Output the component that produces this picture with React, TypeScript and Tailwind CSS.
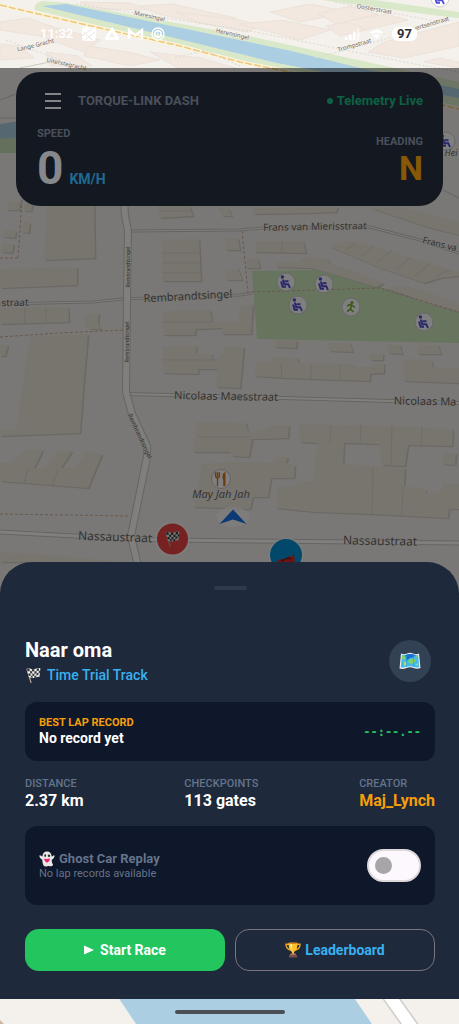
import type { ReactNode } from 'react'

interface Building {
  points: string
}

interface StreetLabel {
  text: string
  x: number
  y: number
  size: number
  rotate: number
}

interface StatProps {
  label: string
  value: string
  accent?: boolean
}

// above the dash
const northBuildings: Building[] = [
  { points: '0,22 28,18 62,30 40,36 0,30' },
  { points: '40,36 58,28 100,40 84,52' },
  { points: '88,46 128,52 160,60 130,66 84,56' },
  { points: '150,52 200,58 236,68 178,68' },
  { points: '0,44 20,46 34,58 0,60' },
  { points: '46,52 78,56 92,66 50,66' },
  { points: '80,2 130,3 150,10 96,9' },
  { points: '140,6 172,4 236,18 216,26 158,14' },
  { points: '176,12 240,20 262,26 246,32 198,22' },
  { points: '240,24 282,20 330,30 300,40' },
  { points: '270,12 310,4 350,12 300,22' },
  { points: '318,14 350,6 378,14 336,24' },
  { points: '352,20 386,14 408,20 366,30' },
  { points: '326,26 350,22 366,30 340,36' },
  { points: '368,52 384,42 459,22 459,46 404,58' },
  { points: '424,62 440,58 459,62 459,68' },
]

const buildings: Building[] = [
  // west side
  { points: '8,202 20,202 19,210 7,210' },
  { points: '24,204 33,204 31,211 24,211' },
  { points: '24,221 30,223 29,233 22,232' },
  { points: '4,230 16,231 15,238 3,237' },
  { points: '2,244 14,244 12,253 1,252' },
  { points: '47,204 94,204 95,258 44,260' },
  { points: '0,269 77,267 77,285 0,288' },
  { points: '0,308 68,307 69,322 0,324' },
  { points: '84,314 99,313 98,324 101,329 91,329 85,325' },
  { points: '0,345 8,345 5,356 0,356' },
  { points: '30,337 88,334 84,380 80,433 0,436 0,430 16,430' },
  { points: '0,463 10,463 28,449 43,450 34,468 45,468 58,451 72,451 61,468 76,467 86,452 102,454 88,488 0,481' },
  { points: '0,552 60,556 100,560 130,562 0,562' },
  // middle
  { points: '157,206 190,206 193,216 160,218' },
  { points: '218,208 228,208 232,216 222,216' },
  { points: '162,240 199,239 201,281 162,281' },
  { points: '226,238 238,238 240,250 226,250' },
  { points: '226,272 238,268 242,280 226,280' },
  { points: '163,311 210,310 212,322 240,322 240,333 224,334 222,328 196,329 195,335 163,335' },
  { points: '163,346 196,346 196,353 212,354 212,359 219,360 224,347 244,347 240,388 216,387 218,369 198,369 198,374 163,373' },
  { points: '197,422 246,423 248,431 262,430 273,425 289,425 288,438 252,439 249,457 232,456 230,452 193,452' },
  { points: '202,464 236,462 275,463 276,457 288,457 286,463 295,465 294,478 271,478 268,497 253,497 250,509 194,507' },
  // east side
  { points: '252,208 338,207 336,212 310,213 254,214' },
  { points: '370,208 400,207 459,222 459,235 430,228' },
  { points: '256,241 303,241 306,253 255,252' },
  { points: '248,259 258,259 260,268 246,268' },
  { points: '276,262 300,262 302,257 328,259 330,264 350,270 384,283 376,287 330,273 310,268 276,267' },
  { points: '330,247 346,241 366,244 459,272 459,276 440,278 424,283 380,268' },
  { points: '386,288 400,285 430,293 459,304 459,312 430,304' },
  { points: '240,306 253,304 251,334 222,334 222,322 238,322' },
  { points: '274,340 297,340 296,348 275,347' },
  { points: '329,343 350,343 353,352 329,351' },
  { points: '387,345 400,345 402,354 388,353' },
  { points: '418,345 438,345 441,354 418,354' },
  { points: '369,354 383,354 383,360 370,360' },
  { points: '256,362 270,362 272,357 298,358 298,363 352,364 354,367 370,367 384,363 384,373 370,374 370,381 340,380 284,378 255,376' },
  { points: '404,359 431,360 433,367 459,368 459,383 404,381' },
  { points: '299,424 389,426 453,429 452,446 408,445 405,466 382,465 379,444 344,443 343,464 405,468 404,486 425,489 427,494 440,492 443,484 459,484 459,509 449,509 448,518 372,514 315,512 276,508 278,487 296,486 298,481 314,481 315,464 317,443 300,442' },
  { points: '444,453 456,453 455,465 443,464' },
]

const streetLabels: StreetLabel[] = [
  { text: 'straat', x: 15, y: 306, size: 10, rotate: -1 },
  { text: 'Rembrandtsingel', x: 188, y: 300, size: 11, rotate: -3 },
  { text: 'Frans van Mierisstraat', x: 315, y: 230, size: 10, rotate: -1 },
  { text: 'Frans va', x: 439, y: 247, size: 9, rotate: 14 },
  { text: 'Nicolaas Maesstraat', x: 226, y: 400, size: 11, rotate: 1 },
  { text: 'Nicolaas Ma', x: 425, y: 405, size: 11, rotate: 1 },
  { text: 'Nassaustraat', x: 115, y: 541, size: 12, rotate: 2 },
  { text: 'Nassaustraat', x: 380, y: 545, size: 12, rotate: 1 },
  { text: 'Rembrandtsingel', x: 130, y: 267, size: 5, rotate: -90 },
  { text: 'Rembrandtsingel', x: 129, y: 342, size: 5, rotate: -90 },
  { text: 'Rembrandtsingel', x: 138, y: 437, size: 6, rotate: 65 },
  { text: 'Maresingel', x: 149, y: 18, size: 6, rotate: 13 },
  { text: 'Herensingel', x: 232, y: 36, size: 6, rotate: 13 },
  { text: 'Oosterstraat', x: 374, y: 11, size: 6, rotate: 10 },
  { text: 'Trompstraat', x: 355, y: 47, size: 6, rotate: -16 },
  { text: 'Evertsenstraat', x: 430, y: 26, size: 6, rotate: -17 },
  { text: 'Lange Gracht', x: 36, y: 47, size: 6, rotate: -14 },
  { text: 'Uiterstegracht', x: 66, y: 66, size: 6, rotate: 12 },
]

const seats = [
  [286, 282],
  [324, 284],
  [298, 305],
  [424, 322],
  [446, 141],
  [440, -2],
]

function Road({ d, width }: { d: string; width: number }) {
  return (
    <g fill="none" strokeLinejoin="round">
      <path d={d} stroke="#cdc8c3" strokeWidth={width + 2} />
      <path d={d} stroke="#fffefc" strokeWidth={width} />
    </g>
  )
}

function CheckeredFlag() {
  return (
    <g>
      <path d="M2 2.200 6 15.600" stroke="#b9a995" strokeWidth="1.200" strokeLinecap="round" />
      <path d="M1.800 2C5 .4 7 3 10 2s3.600-1.200 5.400-.4l-1 8.400c-2-.8-3.400.6-5.600 1S5.600 9.600 4 10.400Z" fill="#f1f1ee" />
      <path
        d="M2 2.100 4.300 1.500 4.900 3.900 2.700 4.600ZM6.800 2.100 9.300 2.200 9.400 4.500 7 4.300ZM11.700 1.500 14 1.200 13.900 3.700 11.600 4ZM4.900 3.900 7 4.300 7.300 6.600 5.300 6.300ZM9.400 4.500 11.600 4 11.500 6.300 9.400 6.900ZM13.900 3.700 15.200 3.700 14.900 6 13.600 5.800ZM3.200 6.800 5.300 6.300 5.900 8.500 3.700 9ZM7.300 6.600 9.400 6.900 9.300 9.100 7.500 8.900ZM11.500 6.300 13.600 5.800 13.300 8 11.300 8.500ZM5.900 8.500 7.500 8.900 7.700 11 6.100 10.300ZM9.300 9.100 11.300 8.500 11.100 10.400 9.200 11Z"
        fill="#33373b"
      />
    </g>
  )
}

function MapView() {
  return (
    <svg
      className="absolute inset-0 h-full w-full"
      viewBox="0 0 459 1024"
      preserveAspectRatio="xMidYMid slice"
      aria-hidden="true"
    >
      <rect width="459" height="1024" fill="#f4f1ec" />

      {/* Park */}
      <path d="M252 271 315 270 380 287 459 312V343L257 339Z" fill="#cfe9bd" />
      <path d="M322 0H374L459 12V18L440 16Z" fill="#d8e8c8" />

      {/* Canal */}
      <path d="M43 1 67 3 253 37 459 82V106L267 68 143 37 35 10Q33 3 43 1Z" fill="#d8e8c8" />
      <path d="M42 6 66 4 287 50 360 68 459 89V98L277 63 150 32Z" fill="#abcee2" />
      <path d="M0 124 20 121V138L0 139Z" fill="#abcee2" />
      <path d="M0 139 20 138V153H0Z" fill="#cbe0b8" />

      {/* Buildings */}
      {northBuildings.map((b, i) => (
        <polygon key={i} points={b.points} fill="#f2e8e0" stroke="#ebe2da" />
      ))}
      {buildings.map((b, i) => (
        <g key={i}>
          <polygon points={b.points} fill="#d8d1c9" transform="translate(1.500 1.200)" />
          <polygon points={b.points} fill="#f1e8dc" />
        </g>
      ))}
      <path
        d="M162 253H199M162 263H200M162 273H201M25 308V323M46 308V322M163 322H212M163 360H219M197 437H250M331 425 330 443M361 425 360 444M392 426 391 465M422 427 421 445M373 468 372 514M403 486 402 515M282 241V252M160 211H192M281 364 282 378M311 364V379M340 365V380M345 250 356 243M362 256 373 246M378 262 392 250M396 269 411 257M413 277 430 264M436 277 449 269M28 468 24 484M58 469 52 485"
        fill="none"
        stroke="#e0d7cc"
      />

      {/* Roads */}
      <Road d="M131 231 240 230 262 228 370 227 420 240 459 253" width={1} />
      <Road d="M0 304 92 302 123 299 240 295 252 293" width={1} />
      <Road d="M126 394 168 395 283 398 390 401 459 403" width={2} />
      <Road d="M0 532 75 536 160 540 459 543" width={3} />
      <Road d="M124 200 125 215 128 231 127 300 126 392 132 414 147 446V457L131 536 138 566" width={6} />
      <path d="M0 100 16 94M0 118 18 118M20 68 60 60M443 190 459 198" stroke="#cdc8c3" strokeWidth="1" />
      <g fill="none" stroke="#d3b09a" strokeDasharray="3 2">
        <path d="M22 200 18 258M0 258H18M0 337 60 333 123 330M242 231 248 293M252 292 380 288 459 312M0 514 130 516" />
      </g>
      <path d="M0 5 47 16 100 28 180 46 240 62 290 72 443 105 459 109" fill="none" stroke="#fbf3dc" strokeWidth="4" />
      <path
        d="M0 5 47 16 100 28 180 46 240 62 290 72 443 105 459 109"
        fill="none"
        stroke="#ecc878"
        strokeWidth="1.500"
        strokeDasharray="7 2"
      />
      <g fill="none" stroke="#ded8d2" strokeDasharray="2 2">
        <path d="M76 4 256 32 404 62 459 72M175 58 205 50 240 66M315 58 345 50 404 34 440 20M6 40 60 60M335 2 440 22" />
      </g>

      {/* Bottom strip */}
      <path d="M100 970H335L372 1024H136Z" fill="#abcee2" />
      <path d="M378 980 418 1036" stroke="#cfcdca" strokeWidth="15" />
      <path d="M378 980 418 1036" stroke="#ffffff" strokeWidth="12" />
      <path d="M0 1020 4 1024H0Z" fill="#cbb6a4" />

      {/* Labels */}
      <g
        fill="#6a6661"
        stroke="#f4f1ec"
        strokeWidth="1"
        paintOrder="stroke"
        textAnchor="middle"
        fontFamily="'Noto Sans', sans-serif"
      >
        {streetLabels.map((l, i) => (
          <text key={i} x={l.x} y={l.y} fontSize={l.size} transform={`rotate(${l.rotate} ${l.x} ${l.y})`}>
            {l.text}
          </text>
        ))}
        <text x="221" y="498" fontSize="11" fontStyle="italic">
          May Jah Jah
        </text>
        <text x="451" y="156" fontSize="9" fontStyle="italic">
          Hei
        </text>
      </g>

      {/* Points of interest */}
      {seats.map(([x, y]) => (
        <g key={`${x}-${y}`} transform={`translate(${x} ${y})`}>
          <circle r="9" fill="#fff" stroke="#d2cecf" />
          <circle cx="-3.600" cy="-5" r="1.700" fill="#5350d8" />
          <path d="M-3.200-2.500-1.800 2.200H2.200L4 6M-5-.5-3.400 4.800H0M-1.500-.8H2.500" fill="none" stroke="#5350d8" strokeWidth="1.900" />
        </g>
      ))}
      <g transform="translate(351 307)">
        <circle r="9" fill="#fff" stroke="#d2cecf" />
        <circle cx="1" cy="-4.500" r="1.500" fill="#79b02c" />
        <path d="M-4-1-1-2.500 1.500-1.500 4 .5M.5-1.500-.5 2 2.500 5M-.5 2-4 4.500" fill="none" stroke="#79b02c" strokeWidth="1.600" />
      </g>
      <g transform="translate(221 479)">
        <circle r="9.500" fill="#fff" stroke="#c9c5c2" />
        <path d="M-3.500 7V-1M-5.400-6.800V-3.500Q-5.400-1-3.500-1T-1.600-3.500V-6.800M-3.500-6.800V-2" fill="none" stroke="#d67a1a" strokeWidth="1.400" />
        <path d="M4.500 7H2.200V1L1.500-1C1.200-4 2-6.500 4.500-7Z" fill="#d67a1a" />
      </g>

      {/* Current position */}
      <ellipse cx="233" cy="517" rx="16.500" ry="10" fill="#fff" opacity="0.700" />
      <path d="M233 509.500 246.500 524 233 519.500 219.500 524Z" fill="#1a72e8" />

      {/* Start and finish markers */}
      <g transform="translate(172.500 539)">
        <circle r="17.500" fill="#fff" opacity="0.600" />
        <circle r="15.500" fill="#ef4444" />
        <g transform="translate(-8.500 -8.500)">
          <CheckeredFlag />
        </g>
      </g>
      <g transform="translate(286 555)">
        <circle r="17.500" fill="#fff" opacity="0.600" />
        <circle r="16" fill="#0390d4" />
        <path d="M-9 6-5 4-1 5 3 1 5 2 8-1 9 8H-9Z" fill="#e0281e" />
        <path d="M-5 6 2 3 5 4" fill="none" stroke="#7c1e1a" strokeWidth="1.500" />
      </g>
    </svg>
  )
}

function StatusBar() {
  return (
    <header className="relative flex h-[68px] items-center justify-between px-10 text-white">
      <div className="flex items-center gap-2">
        <span className="text-[13px] font-semibold">11:32</span>
        <svg width="85" height="16" viewBox="0 0 85 16" fill="none" aria-hidden="true">
          <rect x="1" y="1" width="14" height="14" rx="4" fill="#fff" />
          <path d="M1 10 12 2M4 14l10-8M3 6l8 8" stroke="#ece5df" strokeWidth="1" />
          <path d="M31 3 36.500 12.500H25.500Z" stroke="#fff" strokeWidth="3" strokeLinejoin="round" />
          <path d="M48 13V4l6.500 5.500L61 4v9" stroke="#fff" strokeWidth="2.400" />
          <circle cx="77" cy="8" r="6" stroke="#fff" strokeWidth="1.300" />
          <circle cx="77" cy="8" r="3.200" stroke="#fff" strokeWidth="1.500" />
          <path d="M77 5v6" stroke="#fff" />
        </svg>
      </div>
      <div className="flex items-center gap-2">
        <svg width="40" height="14" viewBox="0 0 40 14" aria-hidden="true">
          <path d="M1 10h2.500v3H1ZM5 7.500h2.500V13H5ZM9 4.500h2.500V13H9Z" fill="#fff" />
          <path d="M13 1.500h2.500V13H13Z" fill="#fff" opacity="0.500" />
          <path d="M26 5.500Q32.500-.5 39 5.500L37.300 7.300Q32.500 3.500 27.700 7.300ZM29 8.500Q32.500 5.700 36 8.500L32.500 12.500Z" fill="#fff" />
        </svg>
        <span className="mr-0.5 rounded-md bg-white px-[5px] text-[13px] leading-[14px] font-bold text-[#303030]">97</span>
      </div>
    </header>
  )
}

function Dash() {
  return (
    <section className="mx-4 mt-1 rounded-3xl bg-[#141921] pt-[18px] pr-5 pb-3 pl-[21px] font-bold">
      <div className="flex items-center justify-between">
        <div className="flex items-center gap-[17px]">
          <button type="button" aria-label="Menu" className="ml-2 flex h-[22px] w-4 flex-col justify-center gap-[5px]">
            <span className="h-0.5 bg-[#858688]" />
            <span className="h-0.5 bg-[#858688]" />
            <span className="h-0.5 bg-[#858688]" />
          </button>
          <h1 className="text-[13px] leading-5 text-[#4a505b]">TORQUE-LINK DASH</h1>
        </div>
        <p className="flex items-center gap-1 text-[13px] leading-5 text-[#0c6244]">
          <span className="size-1.5 rounded-full bg-[#0c6244]" />
          Telemetry Live
        </p>
      </div>
      <div className="mt-[14px] flex items-center justify-between">
        <div>
          <p className="text-[11px] leading-4 text-[#4a505b]">SPEED</p>
          <p className="flex items-baseline gap-1.5">
            <span className="text-[46px] leading-[52px] text-[#87888b]">0</span>
            <span className="text-sm text-[#1f6a90]">KM/H</span>
          </p>
        </div>
        <div className="text-right">
          <p className="text-[11px] leading-4 text-[#4a505b]">HEADING</p>
          <p className="text-[34px] leading-9 text-[#875805]">N</p>
        </div>
      </div>
    </section>
  )
}

function Stat({ label, value, accent }: StatProps) {
  return (
    <div>
      <dt className="text-[11px] leading-[14px] font-medium text-[#64748b]">{label}</dt>
      <dd className={accent ? 'text-base leading-5 font-bold text-[#f59e0b]' : 'text-base leading-5 font-bold text-white'}>
        {value}
      </dd>
    </div>
  )
}

function Card({ children, className }: { children: ReactNode; className: string }) {
  return (
    <div className={`flex items-center justify-between rounded-xl bg-[#0f172a] px-[14px] ${className}`}>{children}</div>
  )
}

function FlagIcon() {
  return (
    <svg width="16" height="16" viewBox="0 0 16 16" fill="none" aria-hidden="true">
      <CheckeredFlag />
    </svg>
  )
}

function WorldMapIcon() {
  return (
    <svg width="22" height="18" viewBox="0 0 22 18" aria-hidden="true">
      <path d="M2 1.500Q5 3 8 1.500T14 1.500 20 1.500L21.500 16Q18 17.500 14.500 16T7.500 16 .5 16.500Z" fill="#e8edf0" />
      <path d="M3 2.700Q5.500 4 8 2.700T14 2.700 19 2.800L20.200 15Q17.500 16 14.500 14.800T7.500 14.800 1.800 15.200Z" fill="#42b9ec" />
      <path d="M6 3.300Q11 .8 17 3.200L14 5.500 11 6 8 8.500 7 6Z" fill="#176fd2" />
      <path d="M3.200 3.500 5.500 3.600 6.500 6 4.500 8 2.700 6.500ZM9 8.500Q11 6 14 6.500L17 8 16 10 13 12 10 11ZM16 4 18.500 3.500 18 6Z" fill="#7fd069" />
      <path d="M4.500 9.500 7 10 8 12.500 5.500 14.300ZM16 12 19 11.500 19 14Z" fill="#a8dd72" />
      <path d="M7.500 2.500V15M14.500 2.500V15" stroke="#2b9fd6" strokeWidth="0.600" />
    </svg>
  )
}

function GhostIcon() {
  return (
    <svg width="16" height="16" viewBox="0 0 16 16" aria-hidden="true">
      <path d="M8 .5C11 .5 12.600 2.600 12.700 5.500 13.800 5.500 14 4.300 15 4.200 16 4.300 15.500 7.500 12.800 8.700 12.700 10.500 13 12 14 13.500 14.400 14.600 12 15.800 10 15 8.800 14.600 8 15.900 6.500 15.500 4.500 15.200 3.500 13.500 3.300 8.800 1 7.800-.1 5 .7 4.300 1.600 4 2.300 5.500 3.400 5.500 3.500 2.600 5 .5 8 .5Z" fill="#e9e7e4" />
      <ellipse cx="6.200" cy="4.600" rx="0.900" ry="1.300" fill="#2c2b31" />
      <circle cx="10" cy="4.700" r="1.200" fill="#2c2b31" />
      <path d="M5 7.400Q8 8.500 11 7.300 10.800 10.700 8.500 11.500 5.500 11 5 7.400Z" fill="#ec1f72" />
    </svg>
  )
}

function TrophyIcon() {
  return (
    <svg width="16" height="16" viewBox="0 0 16 16" fill="none" aria-hidden="true">
      <path d="M4 2.200H1Q.8 6.500 5.500 8M12 2.200H15Q15.200 6.500 10.500 8" stroke="#f3a61c" strokeWidth="1.400" />
      <path d="M3.500.8H12.500Q12.600 8.500 9 10V12H7V10Q3.400 8.500 3.500.8Z" fill="#fbc02d" />
      <path d="M5.300 1.500H7Q6.800 6 7.500 8.800 5.300 6.500 5.300 1.500Z" fill="#fff0a0" />
      <ellipse cx="8" cy="1.200" rx="4.500" ry="0.700" fill="#d97f16" />
      <path d="M5.500 11.500H10.500L11 13H5Z" fill="#b77756" />
      <path d="M4 13H12V15.500H4Z" fill="#75504a" />
    </svg>
  )
}

function TrackSheet() {
  return (
    <section className="mt-auto rounded-t-[32px] bg-[#1e293b] pt-6 pr-6 pb-7 pl-[25px]">
      <div className="mx-auto mb-12 h-1 w-[33px] rounded-full bg-[#2f3a4c]" />

      {/* Track header */}
      <div className="flex items-center justify-between pr-1">
        <div>
          <h2 className="text-xl leading-6 font-bold text-white">Naar oma</h2>
          <p className="mt-1 flex items-center gap-1.5 text-sm leading-[18px] font-medium text-[#38b0f0]">
            <FlagIcon />
            Time Trial Track
          </p>
        </div>
        <button
          type="button"
          aria-label="Show map"
          className="flex size-[42px] items-center justify-center rounded-full bg-[#334155]"
        >
          <WorldMapIcon />
        </button>
      </div>

      {/* Best lap */}
      <Card className="mt-[18px] py-[14px]">
        <div>
          <p className="text-[11px] leading-[14px] font-bold text-[#f59e0b]">BEST LAP RECORD</p>
          <p className="text-sm leading-[17px] font-bold text-white">No record yet</p>
        </div>
        <span className="font-['DejaVu_Sans_Mono',monospace] text-xs font-bold text-[#22c55e]">--:--.--</span>
      </Card>

      <dl className="mt-4 flex justify-between">
        <Stat label="DISTANCE" value="2.37 km" />
        <Stat label="CHECKPOINTS" value="113 gates" />
        <Stat label="CREATOR" value="Maj_Lynch" accent />
      </dl>

      {/* Ghost replay */}
      <Card className="mt-[15px] py-[23px]">
        <label htmlFor="ghost" className="text-[#64748b]">
          <span className="flex items-center gap-1 text-[13px] leading-4 font-bold">
            <GhostIcon />
            Ghost Car Replay
          </span>
          <span className="block text-[11px] leading-[14px]">No lap records available</span>
        </label>
        <input
          id="ghost"
          type="checkbox"
          role="switch"
          className="relative h-[33px] w-[54px] appearance-none rounded-full border-2 border-[#dcd8dc] bg-[#fdf8fd] before:absolute before:top-1.5 before:left-1.5 before:size-[17px] before:rounded-full before:bg-[#a7a5a7]"
        />
      </Card>

      <div className="mt-6 grid grid-cols-2 gap-[10px] text-sm font-bold">
        <button type="button" className="flex h-[42px] items-center justify-center gap-1.5 rounded-[14px] bg-[#22c55e] text-white">
          <svg width="10" height="10" viewBox="0 0 10 10" aria-hidden="true">
            <path d="M0 .5 10 5 0 9.500Z" fill="currentColor" />
          </svg>
          Start Race
        </button>
        <button
          type="button"
          className="flex h-[42px] items-center justify-center gap-1 rounded-[14px] border border-[#79747e] text-[#38b0f0]"
        >
          <TrophyIcon />
          Leaderboard
        </button>
      </div>
    </section>
  )
}

export default function App() {
  return (
    <main className="relative flex min-h-screen flex-col overflow-hidden font-['Roboto',sans-serif]">
      <MapView />
      <StatusBar />
      <div className="relative flex flex-1 flex-col bg-black/50">
        <Dash />
        <TrackSheet />
      </div>
      <footer className="relative flex h-[25px] items-center justify-center">
        <div className="h-1 w-[110px] rounded-full bg-[#4a4f55]" />
      </footer>
    </main>
  )
}
